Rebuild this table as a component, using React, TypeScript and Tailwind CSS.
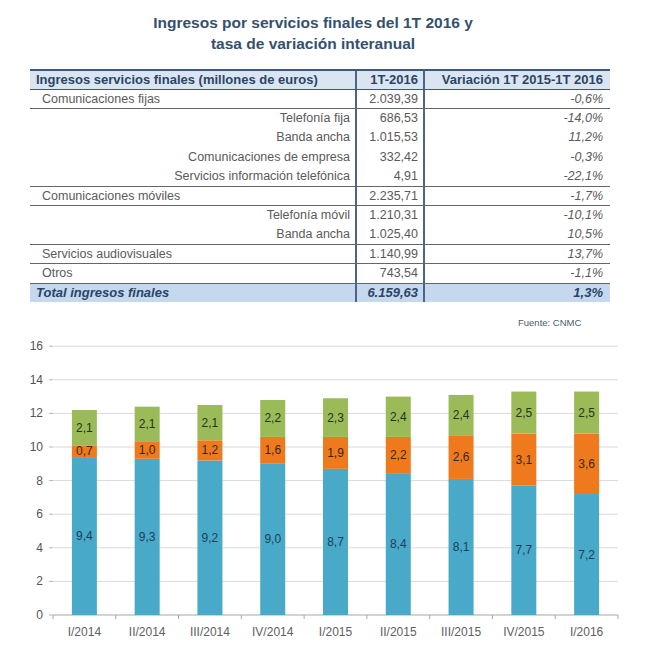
const rows: { label: string; value: string; change: string; sub?: boolean; line?: boolean; h: string }[] = [
  { label: "Comunicaciones fijas", value: "2.039,39", change: "-0,6%", line: true, h: "h-[19px]" },
  { label: "Telefonía fija", value: "686,53", change: "-14,0%", sub: true, h: "h-[19px]" },
  { label: "Banda ancha", value: "1.015,53", change: "11,2%", sub: true, h: "h-[19px]" },
  { label: "Comunicaciones de empresa", value: "332,42", change: "-0,3%", sub: true, h: "h-[20px]" },
  { label: "Servicios información telefónica", value: "4,91", change: "-22,1%", sub: true, line: true, h: "h-[20px]" },
  { label: "Comunicaciones móviles", value: "2.235,71", change: "-1,7%", line: true, h: "h-[19px]" },
  { label: "Telefonía móvil", value: "1.210,31", change: "-10,1%", sub: true, h: "h-[19px]" },
  { label: "Banda ancha", value: "1.025,40", change: "10,5%", sub: true, line: true, h: "h-[20px]" },
  { label: "Servicios audiovisuales", value: "1.140,99", change: "13,7%", line: true, h: "h-[19px]" },
  { label: "Otros", value: "743,54", change: "-1,1%", line: true, h: "h-[20px]" },
];

const quarters = ["I/2014", "II/2014", "III/2014", "IV/2014", "I/2015", "II/2015", "III/2015", "IV/2015", "I/2016"];
const blue = [9.4, 9.3, 9.2, 9.0, 8.7, 8.4, 8.1, 7.7, 7.2];
const orange = [0.7, 1.0, 1.2, 1.6, 1.9, 2.2, 2.6, 3.1, 3.6];
const green = [2.1, 2.1, 2.1, 2.2, 2.3, 2.4, 2.4, 2.5, 2.5];

const fmt = (n: number) => n.toFixed(1).replace(".", ",");

function Chart() {
  const left = 53;
  const right = 618;
  const base = 280;
  const unit = 16.8;
  const step = (right - left) / 9;
  const barW = 25;
  const y = (v: number) => base - v * unit;

  return (
    <svg width={650} height={312} className="block" style={{ fontFamily: '"Liberation Sans", Arial, sans-serif' }}>
      {/* grid + y axis */}
      {[0, 2, 4, 6, 8, 10, 12, 14, 16].map((v) => (
        <g key={v}>
          {v > 0 && <line x1={left} x2={right} y1={y(v)} y2={y(v)} stroke="#dadada" strokeWidth={1} />}
          <line x1={left - 4} x2={left} y1={y(v)} y2={y(v)} stroke="#b5b5b5" strokeWidth={1} />
          <text x={43} y={y(v) + 4} textAnchor="end" fontSize={12} fill="#555">
            {v}
          </text>
        </g>
      ))}
      <line x1={left} x2={right} y1={base} y2={base} stroke="#a8a8a8" strokeWidth={1.2} />
      {quarters.map((_, i) => (
        <line key={i} x1={left + step * i} x2={left + step * i} y1={base} y2={base + 4} stroke="#a8a8a8" strokeWidth={1} />
      ))}
      <line x1={right} x2={right} y1={base} y2={base + 4} stroke="#a8a8a8" strokeWidth={1} />

      {quarters.map((q, i) => {
        const cx = left + step * (i + 0.5);
        const b = blue[i];
        const o = orange[i];
        const g = green[i];
        return (
          <g key={q}>
            <rect x={cx - barW / 2} y={y(b)} width={barW} height={b * unit} fill="#48aac8" />
            <rect x={cx - barW / 2} y={y(b + o)} width={barW} height={o * unit} fill="#ef7a1e" />
            <rect x={cx - barW / 2} y={y(b + o + g)} width={barW} height={g * unit} fill="#9bbb59" />
            <text x={cx} y={y(b / 2) + 4} textAnchor="middle" fontSize={12} fill="#1f3d5c">
              {fmt(b)}
            </text>
            <text x={cx} y={y(b + o / 2) + 4} textAnchor="middle" fontSize={12} fill="#3a2614">
              {fmt(o)}
            </text>
            <text x={cx} y={y(b + o + g / 2) + 4} textAnchor="middle" fontSize={12} fill="#26331a">
              {fmt(g)}
            </text>
            <text x={cx} y={base + 21} textAnchor="middle" fontSize={12} fill="#606060">
              {q}
            </text>
          </g>
        );
      })}
    </svg>
  );
}

export default function App() {
  return (
    <div className="w-[650px] h-[650px] bg-white overflow-hidden font-['Liberation_Sans',Arial,sans-serif]">
      {/* Title */}
      <div className="pt-[12px] pr-[24px] text-center text-[15.5px] leading-[21px] font-bold text-[#34506f]">
        <div>Ingresos por servicios finales del 1T 2016 y</div>
        <div>tasa de variación interanual</div>
      </div>

      {/* Table */}
      <div className="mt-[15px] ml-[30px] w-[580px] border-t-2 border-[#3d5879] text-[12.5px] text-[#5a5a5a]">
        <div className="flex h-[19px] items-center bg-[#dbe5f1] border-b border-[#3d5879] font-bold text-[#2a4566] text-[13px]">
          <div className="w-[325px] pl-[6px]">Ingresos servicios finales (millones de euros)</div>
          <div className="w-[68px] h-full flex items-center justify-end pr-[5px] border-l-2 border-[#4a6585]">1T-2016</div>
          <div className="flex-1 h-full flex items-center justify-end pr-[7px] border-l-2 border-[#4a6585]">
            Variación 1T 2015-1T 2016
          </div>
        </div>

        {rows.map((r, i) => (
          <div key={i} className={`flex ${r.h} items-center ${r.line ? "border-b border-[#666]" : ""}`}>
            <div className={`w-[325px] ${r.sub ? "text-right pr-[5px]" : "pl-[12px]"}`}>{r.label}</div>
            <div className="w-[68px] h-full flex items-center justify-end pr-[5px] border-l-2 border-[#4a6585]">
              {r.value}
            </div>
            <div className="flex-1 h-full flex items-center justify-end pr-[7px] italic border-l-2 border-[#4a6585]">
              {r.change}
            </div>
          </div>
        ))}

        <div className="flex h-[18px] items-center bg-[#c6d8ee] font-bold italic text-[#2a4566] text-[13px]">
          <div className="w-[325px] pl-[6px]">Total ingresos finales</div>
          <div className="w-[68px] h-full flex items-center justify-end pr-[5px] border-l-2 border-[#4a6585]">6.159,63</div>
          <div className="flex-1 h-full flex items-center justify-end pr-[7px] border-l-2 border-[#4a6585]">1,3%</div>
        </div>
      </div>

      <div className="mt-[15px] h-[12px] leading-[12px] pl-[518px] text-[9.5px] text-[#4b5a6e]">Fuente: CNMC</div>

      <div className="mt-[6px]">
        <Chart />
      </div>
    </div>
  );
}
